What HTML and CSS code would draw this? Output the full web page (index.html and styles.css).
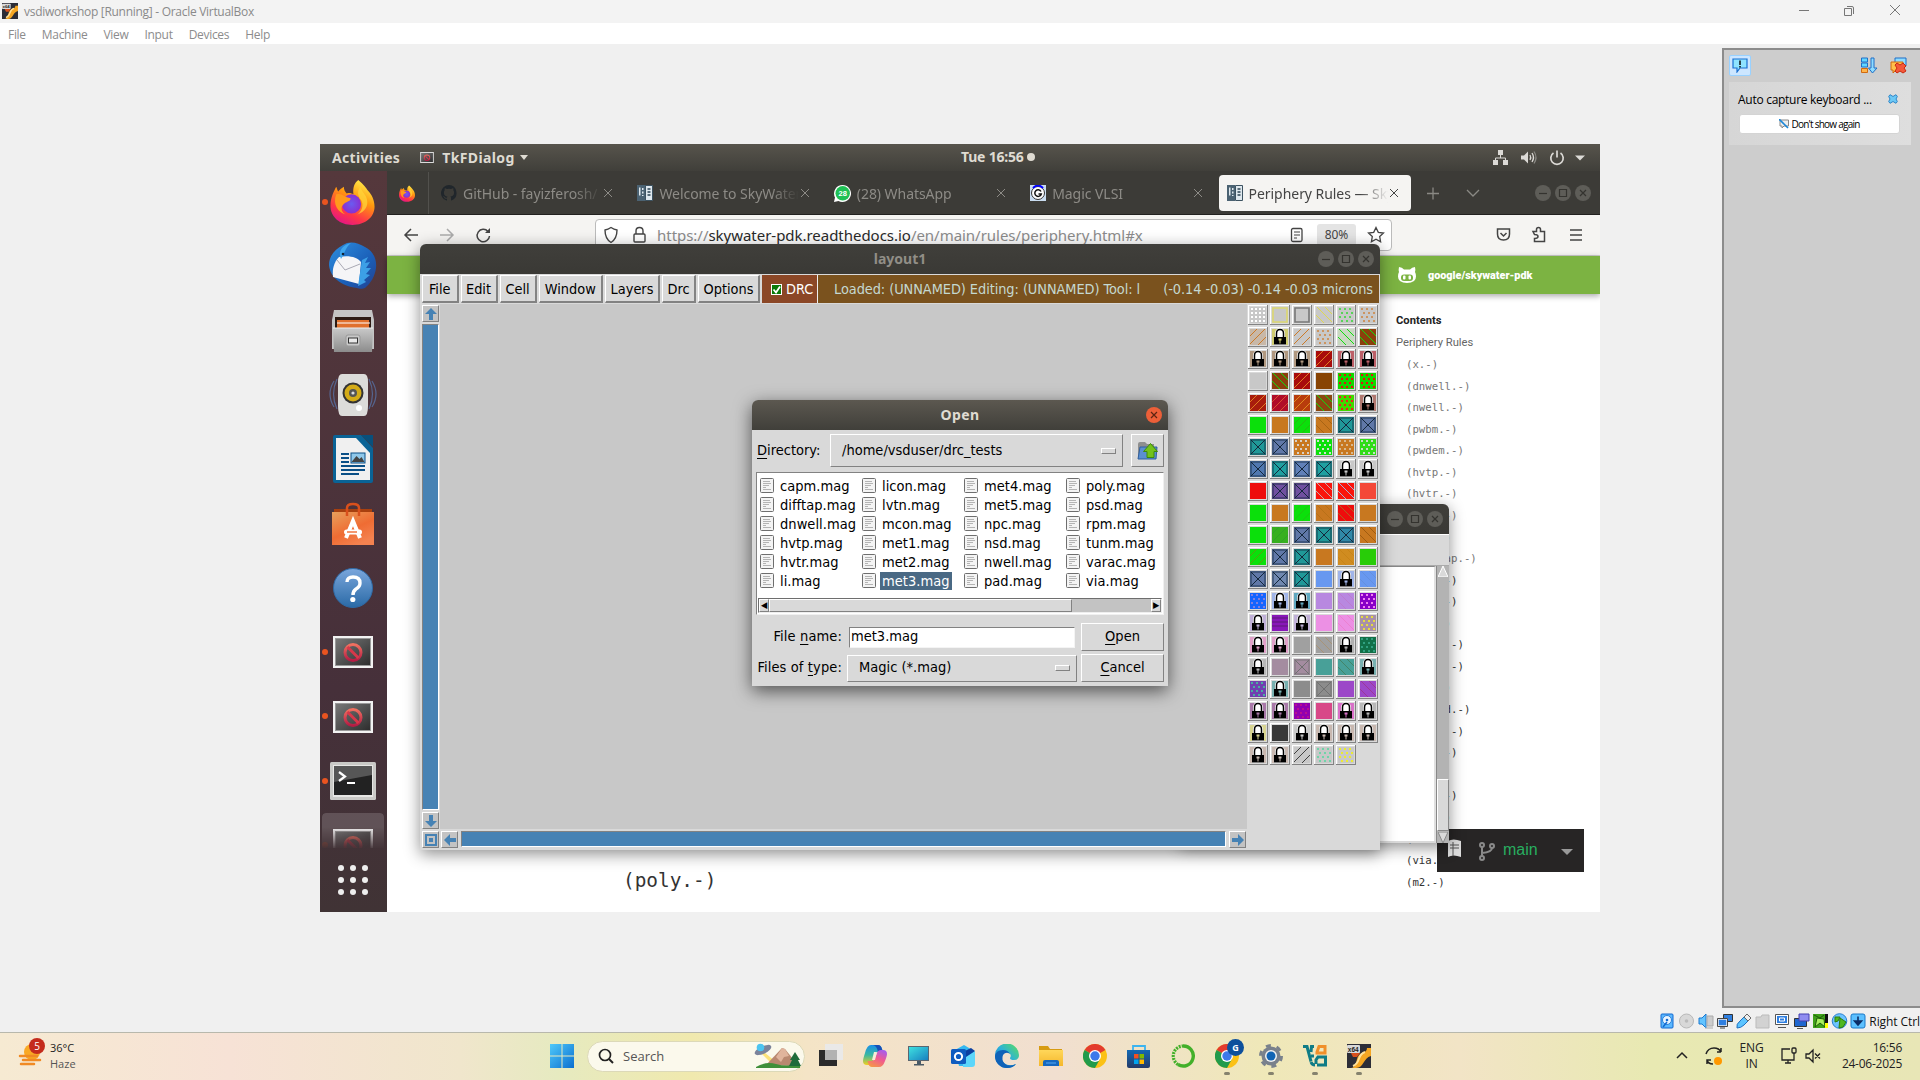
FILE: index.html
```html
<!DOCTYPE html>
<html lang="en">
<head>
<meta charset="utf-8">
<title>vsdiworkshop [Running] - Oracle VirtualBox</title>
<link rel="stylesheet" href="styles.css">
</head>
<body>
<svg class="defs" width="0" height="0">
  <defs>
    <linearGradient id="gFox" x1=".8" y1="0" x2=".3" y2="1"><stop offset="0" stop-color="#fff44f"/><stop offset=".4" stop-color="#ff980e"/><stop offset=".75" stop-color="#ff3647"/><stop offset="1" stop-color="#e31587"/></linearGradient>
    <radialGradient id="gGlobe"><stop offset="0" stop-color="#6a5cf0"/><stop offset="1" stop-color="#8a2fd0"/></radialGradient>
    <linearGradient id="gBird" x1="0" y1="0" x2="1" y2="1"><stop offset="0" stop-color="#2d8fe0"/><stop offset=".6" stop-color="#1b5fb8"/><stop offset="1" stop-color="#23408f"/></linearGradient>
    <linearGradient id="gCab" x1="0" y1="0" x2="0" y2="1"><stop offset="0" stop-color="#c9c9c9"/><stop offset="1" stop-color="#8c8c8c"/></linearGradient>
    <linearGradient id="gBag" x1="0" y1="0" x2=".6" y2="1"><stop offset="0" stop-color="#e8a05c"/><stop offset=".6" stop-color="#ef6c33"/><stop offset="1" stop-color="#f48250"/></linearGradient>
    <linearGradient id="gHelp" x1="0" y1="0" x2="0" y2="1"><stop offset="0" stop-color="#7aa6dc"/><stop offset="1" stop-color="#2a6aa6"/></linearGradient>
    <linearGradient id="gScr" x1="0" y1="0" x2="1" y2="1"><stop offset="0" stop-color="#777"/><stop offset="1" stop-color="#2e2e2e"/></linearGradient>
    <linearGradient id="gNo" x1="0" y1="0" x2="0" y2="1"><stop offset="0" stop-color="#f07060"/><stop offset="1" stop-color="#b41c44"/></linearGradient>
    <linearGradient id="gWin" x1="0" y1="0" x2="1" y2="1"><stop offset="0" stop-color="#4fc9fa"/><stop offset="1" stop-color="#0a6fd0"/></linearGradient>
    <linearGradient id="gEdge" x1="0" y1="1" x2="1" y2="0"><stop offset="0" stop-color="#0f5fb8"/><stop offset=".5" stop-color="#2bb0dc"/><stop offset="1" stop-color="#5be05a"/></linearGradient>
    <linearGradient id="gMon" x1="0" y1="0" x2="1" y2="1"><stop offset="0" stop-color="#3fe0e0"/><stop offset="1" stop-color="#1780c0"/></linearGradient>
    <linearGradient id="gFold" x1="0" y1="0" x2="0" y2="1"><stop offset="0" stop-color="#ffd75a"/><stop offset="1" stop-color="#f5b72c"/></linearGradient>
    <linearGradient id="gStore" x1="0" y1="0" x2="0" y2="1"><stop offset="0" stop-color="#1269b4"/><stop offset="1" stop-color="#243a68"/></linearGradient>
    <linearGradient id="gCopA" x1="0" y1="0" x2="0" y2="1"><stop offset="0" stop-color="#1a8fe8"/><stop offset=".5" stop-color="#3ab8a0"/><stop offset="1" stop-color="#f0d020"/></linearGradient>
    <linearGradient id="gCopB" x1=".8" y1="0" x2=".3" y2="1"><stop offset="0" stop-color="#a45cf0"/><stop offset=".5" stop-color="#f05a90"/><stop offset="1" stop-color="#f5944a"/></linearGradient>
  </defs>
  <symbol id="firefox" viewBox="0 0 46 48">
    <path d="M29 1c6 5 8 8 10 11 4 4 7 10 7 17 0 11-10 19-23 19S0 40 0 28C0 19 4 12 6 8c1 2 1 3 2 5 2-2 4-4 6-5 0 3 1 5 3 7 3-1 5 0 7 1C23 9 25 4 29 1z" fill="url(#gFox)"/>
    <circle cx="22" cy="26" r="10" fill="url(#gGlobe)"/>
    <path d="M6 16c6-2 8 3 15 4 0 4-5 3-8 7-3 3-1 8 3 10-8-2-14-10-10-21z" fill="#ff9a1c"/>
    <path d="M31 8c-3 5-3 9 1 14 3 5 1 12-4 15 8-3 12-9 10-16-1-5-5-7-7-13z" fill="#ffd43a" opacity=".75"/>
  </symbol>
  <symbol id="thunder" viewBox="0 0 48 48">
    <path d="M14 3c7-5 15-2 22 2 8 4 12 12 11 21-1 8-5 15-11 20-2 1-6 1-8 0C12 44 1 35 0 23 0 14 6 7 14 3z" fill="url(#gBird)"/>
    <path d="M10 15c10-2 18 0 22 5l-2 22L4 35C3 27 5 20 10 15z" fill="#f5f5f7"/>
    <path d="M8 18l8 10 15-6" fill="none" stroke="#a9a9b4"/>
    <path d="M12 17c-3-6 0-14 10-16-6 5-6 10-10 16z" fill="#3fa7ee"/><circle cx="14" cy="12" r="1.3" fill="#123"/>
    <path d="M33 18l6-3-3 6 5-1-4 6 5 0-5 6 4 1-6 5 2 2-8 4z" fill="#3c9fe6"/>
  </symbol>
  <symbol id="cabinet" viewBox="0 0 42 44">
    <path d="M2 1h38l2 10v29H0V11z" fill="#c4c4c4"/><path d="M3 8h36v11H3z" fill="#2c1a14"/>
    <path d="M5 11h32v8H5z" fill="#e0702c"/><path d="M5 14h33" stroke="#fff"/>
    <path d="M1 19h40l-1 24H2z" fill="url(#gCab)"/><path d="M1 19h40" stroke="#eee"/>
    <rect x="14" y="26" width="14" height="11" rx="2" fill="#c8c8c8" stroke="#999"/><rect x="16.500" y="29" width="9" height="5" fill="#e8e8e8" stroke="#333"/>
  </symbol>
  <symbol id="rhythm" viewBox="0 0 48 44">
    <path d="M5 8q-8 13 0 26M43 8q8 13 0 26M8 6q-7 15 0 30M40 6q7 15 0 30" fill="none" stroke="#56658f" stroke-width="1.200"/>
    <path d="M13 1h22q4 0 4 8v24q0 10-4 10H13q-4 0-4-10V9q0-8 4-8z" fill="#dcdcda"/>
    <circle cx="24" cy="20" r="10.500" fill="#333"/><circle cx="24" cy="20" r="8.500" fill="#d3ab18"/><circle cx="24" cy="20" r="4" fill="#555"/><circle cx="24" cy="20" r="1.600" fill="#ddd"/><circle cx="30" cy="35" r="3" fill="#fff"/>
  </symbol>
  <symbol id="writer" viewBox="0 0 40 48">
    <path d="M2 0h26l12 13v33q0 2-2 2H2q-2 0-2-2V2q0-2 2-2z" fill="#0a6396"/><path d="M28 0h12v12z" fill="#08507c"/>
    <path d="M3 3h20l14 15v27H3z" fill="#f0f0f0"/>
    <path d="M8 19h8M8 23h8M8 27h8M8 31h24M8 35h24M8 39h18" stroke="#0a4f86" stroke-width="1.800"/>
    <rect x="18" y="18" width="14" height="10" fill="#8fc8ea" stroke="#0a4f86"/><path d="M18.500 27l5-6 3 3 2-2 3 5z" fill="#444"/>
  </symbol>
  <symbol id="bag" viewBox="0 0 42 44">
    <path d="M2 7h38v6H2z" fill="#a8400f"/><path d="M0 10h42v33H0z" fill="url(#gBag)"/>
    <path d="M15 14V6q0-4 6-4t6 4v8" fill="none" stroke="#d9501c" stroke-width="2.500"/>
    <path d="M14 36l7-17 7 17" fill="none" stroke="#fff" stroke-width="4"/><rect x="12" y="27.500" width="18" height="5" rx="2.500" fill="#fff"/><path d="M15 30h10" stroke="#ef6c33" stroke-width="1.400"/>
  </symbol>
  <symbol id="help" viewBox="0 0 40 40"><circle cx="20" cy="20" r="19.500" fill="url(#gHelp)" stroke="#2f6aa6"/>
    <path d="M14 14q0-5 6-5 7 0 7 6 0 4-4 6-3 2-3 6" fill="none" stroke="#fff" stroke-width="3.400"/><circle cx="19.800" cy="31.500" r="2.600" fill="#fff"/></symbol>
  <symbol id="xapp" viewBox="0 0 40 32"><path d="M0 0h40v32H0z" fill="#f2f2f2"/><path d="M2 2h36v28H2z" fill="#999"/><path d="M3 3h34v26H3z" fill="url(#gScr)"/>
    <circle cx="20" cy="16.500" r="8" fill="none" stroke="url(#gNo)" stroke-width="3"/><path d="M14.500 11l11 11" stroke="#d8384a" stroke-width="3"/></symbol>
  <symbol id="term" viewBox="0 0 46 38"><rect width="46" height="38" rx="1.500" fill="#c9c9c6"/><path d="M3 3h40v32H3z" fill="#e6e6e4"/><path d="M4 4h38v29H4z" fill="#222"/><path d="M4 4h38v9L4 20z" fill="#565656"/>
    <path d="M9 10l6 4.500L9 19" fill="none" stroke="#fff" stroke-width="2.200"/><path d="M17 21h8" stroke="#fff" stroke-width="2"/></symbol>
  <symbol id="book" viewBox="0 0 16 16"><path d="M0 0h8v16H0z" fill="#4b6272"/><path d="M8.500.5h7v15h-7z" fill="#dfe8ee" stroke="#3c5261"/><path d="M2 2.500h1.500v8H2zM5 3h1.500v2H5zM5 6.500h1.500v2H5zM5 10h1.500v1H5z" fill="#dfe8ee"/><path d="M10.500 4h3M10.500 7h3M10.500 10h3" stroke="#2b4252" stroke-width="1.500"/></symbol>
  <symbol id="x" viewBox="0 0 10 10"><path d="M1 1l8 8M9 1L1 9" fill="none" stroke="currentColor"/></symbol>
  <symbol id="wmin" viewBox="0 0 16 16"><circle cx="8" cy="8" r="8" fill="#5e5d58"/><path d="M4 8.500h8" stroke="#34332f" stroke-width="1.200"/></symbol>
  <symbol id="wmax" viewBox="0 0 16 16"><circle cx="8" cy="8" r="8" fill="#5e5d58"/><path d="M4.500 4.500h7v7h-7z" fill="none" stroke="#34332f" stroke-width="1.200"/></symbol>
  <symbol id="wcls" viewBox="0 0 16 16"><circle cx="8" cy="8" r="8" fill="#5e5d58"/><path d="M5 5l6 6M11 5l-6 6" stroke="#34332f" stroke-width="1.200"/></symbol>
  <symbol id="doc" viewBox="0 0 14 15"><rect x=".5" y=".5" width="13" height="14" rx="1" fill="#f4f4f4" stroke="#6e6e6e"/><path d="M3 3.500h7M3 5.500h8M3 7.500h6M3 9.500h3M3 11.500h8" stroke="#b4b4b4"/></symbol>
  <symbol id="chrome" viewBox="0 0 24 24"><circle cx="12" cy="12" r="12" fill="#fbc116"/><path d="M12 12L1.600 6A12 12 0 0 1 22.400 6z" fill="#e33b2e"/><path d="M1.600 6A12 12 0 0 0 12 24l5-9-5-3z" fill="#219b4b"/><circle cx="12" cy="12" r="6" fill="#fff"/><circle cx="12" cy="12" r="4.700" fill="#3c79ea"/></symbol>
  <symbol id="x64" viewBox="0 0 24 24"><path d="M0 0h24v24H0z" fill="#2c2d37"/><path d="M4 24c8-1 3-12 11-15 3-1 5-2 5-5h4v8c-8 2-7 12-15 12z" fill="#f5a623"/><path d="M6 22c8-3 4-12 12-14" fill="none" stroke="#ffe19a" stroke-width="2"/><path d="M4 9h9l-3 4H6z" fill="#d8501c"/><rect x="0" y="1" width="13" height="8" rx="1" fill="#d8d8d8"/><text x=".8" y="7.600" font-size="6.500" font-weight="700" font-family="Liberation Sans, sans-serif" fill="#222">x64</text></symbol>
</svg>

<header class="titlebar">
  <svg class="app-icon"><use href="#x64"/></svg>
  <span class="title">vsdiworkshop [Running] - Oracle VirtualBox</span>
  <svg class="winctl" width="104" height="14" viewBox="0 0 104 14"><g fill="none" stroke="#777"><path d="M1 7.500h10M46.500 5.500h7v7h-7zM49 3.500h5q1.500 0 1.500 1.500v6M92 2l10 10M102 2L92 12"/></g></svg>
</header>
<nav class="menubar"><span>File</span><span>Machine</span><span>View</span><span>Input</span><span>Devices</span><span>Help</span></nav>

<main class="host">
  <section class="guest">
    <div class="topbar">
      <b class="act">Activities</b>
      <svg width="14" height="11" viewBox="0 0 40 32"><use href="#xapp"/></svg>
      <b class="appname">TkFDialog</b><i class="tri"></i>
      <b class="clock">Tue 16:56 <i></i></b>
      <svg class="sys" width="96" height="18" viewBox="0 0 96 18"><g fill="#dcdad6"><path d="M6 1h5v5H6zM1 11h5v5H1zM11 11h5v5h-5z"/><path d="M3.500 11V9h10v2M8.500 6v3" fill="none" stroke="#dcdad6"/><path d="M29 6.500h3l4-4v12l-4-4h-3z"/><path d="M38 6q1.500 2.500 0 5M40 4q3 4.500 0 9" fill="none" stroke="#dcdad6" stroke-width="1.300"/><path d="M42 2.500q4 6 0 12" fill="none" stroke="#8a8984" stroke-width="1.200"/><path d="M61.500 4a6.200 6.200 0 1 0 7 0M65 1.500v7" fill="none" stroke="#dcdad6" stroke-width="1.700"/><path d="M83 6.500h10l-5 5z"/></g></svg>
    </div>
    <div class="desk">
      <aside class="dock">
        <div class="di on"><svg width="45" height="46"><use href="#firefox"/></svg></div>
        <div class="di"><svg width="48" height="48"><use href="#thunder"/></svg></div>
        <div class="di"><svg width="42" height="44"><use href="#cabinet"/></svg></div>
        <div class="di"><svg width="48" height="44"><use href="#rhythm"/></svg></div>
        <div class="di"><svg width="40" height="48"><use href="#writer"/></svg></div>
        <div class="di"><svg width="42" height="44"><use href="#bag"/></svg></div>
        <div class="di"><svg width="40" height="40"><use href="#help"/></svg></div>
        <div class="di on"><svg width="40" height="32"><use href="#xapp"/></svg></div>
        <div class="di on"><svg width="40" height="32"><use href="#xapp"/></svg></div>
        <div class="di on"><svg width="46" height="38"><use href="#term"/></svg></div>
        <div class="di on cut"><svg width="40" height="32"><use href="#xapp"/></svg></div>
        <div class="apps"><i></i><i></i><i></i><i></i><i></i><i></i><i></i><i></i><i></i></div>
      </aside>
      <section class="browser">
        <div class="tabs">
          <div class="home"><svg width="16" height="17"><use href="#firefox"/></svg></div>
          <div class="tab"><svg width="16" height="16" viewBox="0 0 16 16"><path fill="#20262b" d="M8 0a8 8 0 0 0-2.500 15.600c.4 0 .5-.2.500-.4v-1.500c-2.200.5-2.700-1-2.700-1-.4-.9-.9-1.200-.9-1.200-.7-.5 0-.5 0-.5.800.1 1.200.8 1.200.8.700 1.300 1.900.9 2.400.7 0-.5.300-.9.500-1.100-1.800-.2-3.600-.9-3.600-4 0-.9.300-1.600.8-2.100 0-.2-.3-1 .1-2.100 0 0 .7-.2 2.200.8a7.500 7.500 0 0 1 4 0c1.500-1 2.200-.8 2.200-.8.400 1.100.1 1.900.1 2.100.5.600.8 1.300.8 2.100 0 3.100-1.900 3.700-3.700 3.900.3.300.6.800.6 1.500v2.200c0 .2.100.5.500.4A8 8 0 0 0 8 0z"/></svg><span>GitHub - fayizferosh/</span><svg class="tx"><use href="#x"/></svg></div>
          <div class="tab"><svg width="16" height="16"><use href="#book"/></svg><span>Welcome to SkyWater</span><svg class="tx"><use href="#x"/></svg></div>
          <div class="tab"><svg width="17" height="17" viewBox="0 0 17 17"><path d="M8.500 0a8.500 8.500 0 1 1-4 16L0 17l1-4.500A8.500 8.500 0 0 1 8.500 0z" fill="#fff"/><circle cx="8.700" cy="8.300" r="7.200" fill="#1fc155"/><text x="8.700" y="11" text-anchor="middle" font-size="7.500" font-weight="700" font-family="Liberation Sans, sans-serif" fill="#fff">28</text></svg><span>(28) WhatsApp</span><svg class="tx"><use href="#x"/></svg></div>
          <div class="tab"><svg width="16" height="16" viewBox="0 0 16 16"><path fill="#c9dcf0" d="M0 0h16v16H0z"/><circle cx="8" cy="8" r="6.500" fill="#fff" stroke="#333"/><path d="M3 3q5-5 10 0" fill="none" stroke="#00f" stroke-width="2"/><path d="M11 6.500a3.300 3.300 0 1 0 .3 2.500H8.500" fill="none" stroke="#111" stroke-width="1.500"/></svg><span>Magic VLSI</span><svg class="tx"><use href="#x"/></svg></div>
          <div class="tab active"><svg width="16" height="16"><use href="#book"/></svg><span>Periphery Rules — Sky</span><svg class="tx"><use href="#x"/></svg></div>
          <svg class="tabend" width="182" height="18" viewBox="0 0 182 18"><g fill="none" stroke="#8a8984" stroke-width="1.300"><path d="M16 9.500h12M22 3.500v12M56 6l6 6 6-6"/></g><g transform="translate(124 1)"><use href="#wmin" width="16" height="16"/><use href="#wmax" x="20" width="16" height="16"/><use href="#wcls" x="40" width="16" height="16"/></g></svg>
        </div>
        <div class="navbar">
          <svg class="navs" width="98" height="18" viewBox="0 0 98 18"><g fill="none" stroke="#444" stroke-width="1.500"><path d="M15 9H2M8 3L2 9l6 6"/><path d="M37 9h13M44 3l6 6-6 6" stroke="#aaa"/><path d="M85 5.500A6.200 6.200 0 1 0 86.500 10"/><path d="M87 2v5h-5z" fill="#444" stroke="none"/></g></svg>
          <div class="url">
            <svg width="46" height="18" viewBox="0 0 46 18"><g fill="none" stroke="#444" stroke-width="1.400"><path d="M8 1.500q3 2 6 2.500c0 6-2 10-6 12.500C4 14 2 10 2 4q3-.5 6-2.500z"/><rect x="31" y="8" width="11" height="8" rx="1"/><path d="M33 8V5q0-3.500 3.500-3.500T40 5v3"/></g></svg>
            <span class="addr">https://<em>skywater-pdk.readthedocs.io</em>/en/main/rules/periphery.html#x</span>
            <svg width="14" height="16" viewBox="0 0 14 16"><rect x="1.500" y="1.500" width="10.500" height="13" rx="1.500" fill="none" stroke="#444" stroke-width="1.300"/><path d="M4 5h6M4 8h6M4 11h3" stroke="#444" stroke-width="1.200"/></svg>
            <span class="zoom">80%</span>
            <svg width="18" height="18" viewBox="0 0 18 18"><path d="M9 1.500l2.300 4.800 5.200.7-3.800 3.600.9 5.200L9 13.300l-4.600 2.500.9-5.200L1.500 7l5.200-.7z" fill="none" stroke="#444" stroke-width="1.300"/></svg>
          </div>
          <svg width="90" height="18" viewBox="0 0 90 18"><g fill="none" stroke="#444" stroke-width="1.500"><path d="M2.500 3h12v5q0 6-6 6t-6-6zM5.500 7l3 3 3-3"/><path d="M38 5.500h3.500v-2q0-2 2-2t2 2v2h4v10h-10v-3q3.500 0 3.500-2t-3.500-2z"/><path d="M75 4h12M75 9h12M75 14h12"/></g></svg>
        </div>
        <div class="greenbar"><svg width="18" height="16" viewBox="0 0 18 16"><path fill="#fff" d="M1 0q3 0 5 2.500h6Q14 0 17 0q.7 3 0 5 1 1.500 1 4.500 0 6.500-9 6.500T0 9.500Q0 6.500 1 5q-.7-2 0-5z"/><rect x="3" y="7.500" width="12" height="6.500" rx="3" fill="#7cb342"/><rect x="5" y="8.500" width="2.500" height="4" rx="1" fill="#fff"/><rect x="10.500" y="8.500" width="2.500" height="4" rx="1" fill="#fff"/></svg><b>google/skywater-pdk</b></div>
        <div class="page">
          <div class="article"><code>(poly.-)</code><p>Table 48 Function Defines FETs extraction measurement and others</p></div>
          <div class="toc"><b>Contents</b><span>Periphery Rules</span>
            <ul><li>(x.-)</li><li>(dnwell.-)</li><li>(nwell.-)</li><li>(pwbm.-)</li><li>(pwdem.-)</li><li>(hvtp.-)</li><li>(hvtr.-)</li><li>(lvtn.-)</li><li>(ncm.-)</li><li>(difftap.-)</li></ul>
            <ul class="dk"><li>(tunm.-)</li><li>(poly.-)</li><li>(rpm.-)</li><li>(varac.-)</li><li>(photo.-)</li><li>(npc.-)</li><li>(n/ psd.-)</li><li>(licon.-)</li><li>(mcon.-)</li><li>(ct.-)</li><li>(capm.-)</li><li>(vpp.-)</li><li>(m1.-)</li><li>(via.-)</li><li>(m2.-)</li></ul>
          </div>
        </div>
      </section>
    </div>

    <div class="version"><svg width="110" height="24" viewBox="0 0 110 24"><path d="M11 2q5-3 13 0v16q-8-3-13 0z" fill="#ddd"/><path d="M16 3v14M13 6h9M13 9h9" stroke="#555"/><g fill="none" stroke="#8a8a8a" stroke-width="2"><circle cx="45" cy="6" r="2"/><circle cx="45" cy="19" r="2"/><circle cx="55" cy="7" r="2"/><path d="M45 8v9M55 9q0 4-10 5"/></g></svg><span>main</span><i></i></div>

    <section class="win console">
      <div class="wtitle"><svg class="wb"><use href="#wmin" width="16" height="16"/><use href="#wmax" x="20" width="16" height="16"/><use href="#wcls" x="40" width="16" height="16"/></svg></div>
      <div class="cmenu"></div>
      <div class="cbody"><div class="ctext"></div><div class="cscroll"><svg width="10" height="11"><path d="M5 0l5 11H0z" fill="#d9d9d9" stroke="#fff"/></svg><i></i><svg width="10" height="11"><path d="M0 0h10L5 11z" fill="#d9d9d9" stroke="#888"/></svg></div></div>
    </section>

    <section class="win magic">
      <div class="wtitle"><span>layout1</span><svg class="wb"><use href="#wmin" width="16" height="16"/><use href="#wmax" x="20" width="16" height="16"/><use href="#wcls" x="40" width="16" height="16"/></svg></div>
      <div class="mmenu"><span class="w36">File</span><span class="w37">Edit</span><span class="w38">Cell</span><span class="w65">Window</span><span class="w56">Layers</span><span class="w34">Drc</span><span class="w63">Options</span>
        <div class="drc"><svg width="11" height="11"><path d="M0 0h11v11H0z" fill="#fff"/><path d="M1 1h9v9H1z" fill="#0a7a0a"/><path d="M2.500 5.500l2.500 3L9 2.500" fill="none" stroke="#fff" stroke-width="1.800"/></svg>DRC</div>
        <div class="status"><span>Loaded: (UNNAMED) Editing: (UNNAMED) Tool: l</span><span class="pos">(-0.14 -0.03) -0.14 -0.03 microns</span></div></div>
      <div class="mbody">
        <div class="vs"><svg class="ar"><path d="M8 2l6 6h-4v6H6V8H2z"/></svg><i></i><svg class="ar"><path d="M8 14l6-6h-4V2H6v6H2z"/></svg><svg class="ar"><path d="M2 2h12v12H2zM4 4v8h8V4z" fill-rule="evenodd"/><path d="M6 6h4v4H6z"/></svg></div>
        <div class="mcol"><div class="canvas"></div>
          <div class="hs"><svg class="ar"><path d="M2 8l6-6v4h6v4H8v4z"/></svg><i></i><svg class="ar"><path d="M14 8L8 2v4H2v4h6v4z"/></svg></div></div>
        <div class="palette" id="palette"></div>
      </div>
    </section>

    <section class="win dialog">
      <div class="wtitle"><span>Open</span><svg class="wb1" width="16" height="16"><circle cx="8" cy="8" r="8" fill="#ec5f38"/><path d="M5 5l6 6M11 5l-6 6" stroke="#5c2412" stroke-width="1.200"/></svg></div>
      <div class="dbody">
        <div class="drow r1"><label><u>D</u>irectory:</label><div class="sel raised"><span>/home/vsduser/drc_tests</span><i></i></div><div class="up raised"><svg width="22" height="20" viewBox="0 0 22 20"><path d="M1 3q0-2 2-2h5l2 2h7v15H1z" fill="#8f8f8f"/><path d="M3 6h17l-1 12H1z" fill="#5b8fd0" stroke="#2f5f9f"/><path d="M13.500 2.500l7 8h-3.500v6h-7v-6H6.500z" fill="#73c21a" stroke="#3e8a0a"/></svg></div></div>
        <div class="list">
          <div class="files" id="fileList"></div>
          <div class="fscroll"><b class="raised">◀</b><i class="raised"></i><em></em><b class="raised">▶</b></div>
        </div>
        <div class="drow r2"><label>File <u>n</u>ame:</label><div class="entry">met3.mag</div><div class="btn raised"><u>O</u>pen</div></div>
        <div class="drow r3"><label>Files of <u>t</u>ype:</label><div class="sel raised"><span>Magic (*.mag)</span><i></i></div><div class="btn raised"><u>C</u>ancel</div></div>
      </div>
    </section>
  </section>

  <aside class="notes">
    <div class="ntools"><span class="nsel"><svg width="16" height="16" viewBox="0 0 16 16"><path d="M1 2h14v9H8l-3 4v-4H1z" fill="#8fe4ff" stroke="#1a6fd0" stroke-width="1.200"/><path d="M8 3.500v4.500M8 9v1.500" stroke="#000" stroke-width="1.400"/></svg></span>
      <svg class="n2" width="46" height="17" viewBox="0 0 46 17"><g stroke="#1f6fc8"><path d="M.5 1h6v4h-6zM.5 6h6v4h-6z" fill="#62d6ff"/><path d="M.5 11.500h6v4h-6z" fill="#ffb54a" stroke="#d06a10"/><path d="M10 1h3v10h3l-4.500 5L7.500 11H10z" fill="#8fdcff"/><path d="M34 1h11v8H34z" fill="#8fdcff"/></g><path d="M30 5h12v8h-7l-3 3v-3h-2z" fill="#ffc04a" stroke="#d06a10"/><path d="M36 6l3 2 3-2 3 3-2 2 2 3-3 2-3-2-3 2-2-2 2-3-2-3z" fill="#f4583a" stroke="#c82a10"/></svg></div>
    <div class="ncard"><div class="nh"><span>Auto capture keyboard ...</span><svg width="10" height="10" viewBox="0 0 10 10"><path d="M2 .7L5 2.500 8 .7 9.300 2.500 8 5l1.300 2.500L8 9.300 5 7.500 2 9.300.7 7.500 2 5 .7 2.500z" fill="#6cc8f5" stroke="#2f86c8"/></svg></div>
      <div class="nbtn"><svg width="10" height="10" viewBox="0 0 10 10"><path d="M1 1h8.500v6H5L3 9V7H1z" fill="#eee" stroke="#888"/><path d="M0 0l9 9" stroke="#1a86d8" stroke-width="1.600"/></svg>Don't show again</div></div>
  </aside>
</main>

<footer class="vstatus">
  <svg width="206" height="17" viewBox="0 0 206 17">
    <rect x="1" y="1" width="12" height="14" rx="1" fill="#5bb8ff" stroke="#1268d0"/><circle cx="7" cy="7" r="4.500" fill="#e8f4ff" stroke="#2a7fd8"/><circle cx="7" cy="7" r="1.300" fill="#1268d0"/><path d="M3 14l4-5" stroke="#1268d0" stroke-width="1.500"/>
    <circle cx="26.500" cy="8" r="7" fill="#d8d8d8" stroke="#b8b8b8"/><circle cx="26.500" cy="8" r="1.800" fill="#bbb"/>
    <path d="M39 5h3l4-4v14l-4-4h-3z" fill="#62c4ff" stroke="#1a78d0"/><path d="M47 3h6v10h-6z" fill="#ccc" stroke="#aaa"/><path d="M45 15h8" stroke="#aaa"/>
    <path d="M63.500 1.500h9v7h-9z" fill="#2f7fe0" stroke="#333"/><path d="M58 6h9v7h-9z" fill="#2f7fe0" stroke="#eee" stroke-width="1.500"/><path d="M57.500 5.500h10v8h-10zM60 15h5" fill="none" stroke="#444"/>
    <path d="M77 15q-1-4 3-7l4-4 4 4-4 4q-3 3-7 3z" fill="#5cc4ff" stroke="#1f70c0"/><path d="M84 4l3-3 4 4-3 3z" fill="#eee" stroke="#666"/>
    <path d="M96 4h5l1-2h7v13H96z" fill="#d2d2d2" stroke="#bbb"/>
    <path d="M115.500 1.500h13v10h-13zM118 14.500h8" fill="#fff" stroke="#555"/><path d="M117 3h10v7h-10z" fill="#2f7fe0"/><path d="M119.500 5h5v3h-5z" fill="#2f7fe0" stroke="#fff"/>
    <path d="M134.500 5.500h12v8h-12z" fill="#1f66d0" stroke="#333"/><path d="M139 1h10v7h-10z" fill="#8f8cf0" stroke="#4440b0"/><path d="M137 15.500h6" stroke="#555"/>
    <path d="M153 1h12v14h-12z" fill="#3fa01a"/><path d="M155 14l2-9 7 1 1 8-5-4z" fill="#a8f060" stroke="#1c5c08"/><path d="M154 2l6 3 4-3" fill="none" stroke="#1c5c08"/><path d="M165 1h3v14h-3z" fill="#111"/><path d="M165 10h3v5h-3z" fill="#ff0"/>
    <circle cx="179.500" cy="8" r="7.300" fill="#6cc4ff" stroke="#2b7fd0"/><path d="M175 4h5l-2 4-3 1zM180 5l6 4-3 5-4 1z" fill="#4fb81f" stroke="#2d7c10"/>
    <rect x="191" y="1" width="14" height="14" rx="2" fill="#5cc0ff" stroke="#1a78c8"/><path d="M198 3.500v8M194.500 8l3.500 4 3.500-4z" fill="#0c2c66" stroke="#0c2c66" stroke-width="1.600"/>
  </svg><span>Right Ctrl</span>
</footer>

<footer class="taskbar">
  <div class="weather"><svg width="28" height="30" viewBox="0 0 28 30"><circle cx="14" cy="14" r="8" fill="#f9a825"/><path d="M2 18h17M5 22h17M3 26h13" stroke="#f08a24" stroke-width="2.500" stroke-linecap="round"/><circle cx="19" cy="8" r="8" fill="#c42b1c"/><text x="19" y="12" text-anchor="middle" font-size="10" font-family="Open Sans, sans-serif" fill="#fff">5</text></svg><div>36°C<br><span>Haze</span></div></div>
  <div class="tcenter">
    <svg class="ti" viewBox="0 0 24 24"><path d="M0 0h11.500v11.500H0zM12.500 0H24v11.500H12.500zM0 12.500h11.500V24H0zM12.500 12.500H24V24H12.500z" fill="url(#gWin)"/></svg>
    <div class="search"><svg width="16" height="16" viewBox="0 0 16 16"><circle cx="7" cy="7" r="5.500" fill="none" stroke="#222" stroke-width="1.700"/><path d="M11 11l4 4" stroke="#222" stroke-width="2"/></svg><span>Search</span>
      <svg width="48" height="26" viewBox="0 0 48 26"><path d="M10 9l-2 2 10 10 4-2z" fill="#fbe27a"/><path d="M12 22L28 5l3 1 8 10v7z" fill="#b98870"/><path d="M22 14l6-9 3 1 4 7-5 1-3 5z" fill="#e0b49c"/><path d="M2 24q10-6 20-3t24 0v4H2z" fill="#3f8f3a"/><path d="M41 9l5 8h-2l3 6H35l3-6h-2z" fill="#1f6b3a"/><ellipse cx="9" cy="7" rx="9" ry="3.800" fill="#7b839a" transform="rotate(-25 9 7)"/><circle cx="6.500" cy="4.500" r="3.800" fill="#4cc4f0"/></svg></div>
    <svg class="ti" viewBox="0 0 24 24"><path d="M0 6h18v16H0z" fill="#2b2b2b"/><path d="M6 0h18v16H6z" fill="#e9e9ea" opacity=".95"/><path d="M6 6h12v10H6z" fill="#b2b2b2"/></svg>
    <svg class="ti" viewBox="0 0 24 24"><path d="M8 1h7q3 0 4 4l1 3h-4q-3 0-4 3l-2 6q-1 4-4 4H4q-4 0-4-4 0-2 2-8Q4 1 8 1z" fill="url(#gCopA)"/><path d="M10 1h5q3 0 4 4l1 3h-5q-1-6-5-7z" fill="#1750b8"/><path d="M16 23H9q-3 0-4-4l-.5-2H8q3 0 4-3l2-5q1-3 4-3h2q4 0 4 4 0 2-2 7-2 6-6 6z" fill="url(#gCopB)"/><path d="M11 8h3l-2 8H9z" fill="#f6ecd8"/></svg>
    <svg class="ti" viewBox="0 0 24 24"><path d="M1 2h21v15H1z" fill="#5b6670"/><path d="M2 3h19v13H2z" fill="url(#gMon)"/><path d="M10 17h4v3h3v1.500H7V20h3z" fill="#4a5a66"/></svg>
    <svg class="ti" viewBox="0 0 24 24"><path d="M4 6l9-5 10 6v15H8z" fill="#35b8f0"/><path d="M12 14l12-7v13q0 3-3 3h-9z" fill="#5cd6fa"/><path d="M10 9l10-5 4 3-12 8z" fill="#0b3fa0"/><rect y="5" width="15" height="15" rx="1.500" fill="#0f5cc0"/><circle cx="7.500" cy="12.500" r="3.600" fill="none" stroke="#fff" stroke-width="2"/></svg>
    <svg class="ti" viewBox="0 0 24 24"><path d="M0 12A12 12 0 0 1 24 11q0 5-5 5-4 0-4-2 2-3-1-5-3-2-6 1-3 5 1 9 5 4 12 1-3 4-9 4A12 12 0 0 1 0 12z" fill="url(#gEdge)"/><path d="M0 12q1-6 8-6 5 0 7 4-4-3-7 1-2 5 2 9 4 3 11 0-3 4-9 4A12 12 0 0 1 0 12z" fill="#0f62b8"/></svg>
    <svg class="ti" viewBox="0 0 24 24"><path d="M0 2h9l2 3h12v16H0z" fill="#d79b12"/><path d="M0 6h24v16H0z" fill="url(#gFold)"/><path d="M4 22v-4q0-2 2-2h12q2 0 2 2v4z" fill="#1568c0"/><path d="M7 19h10" stroke="#58a8f0"/></svg>
    <svg class="ti"><use href="#chrome"/></svg>
    <svg class="ti" viewBox="0 0 24 24"><path d="M6 6V2h12v4" fill="none" stroke="#3cb4f0" stroke-width="1.800"/><path d="M0 6h23v16q0 2-2 2H2q-2 0-2-2z" fill="url(#gStore)"/><path d="M7 10h4.500v4.500H7z" fill="#f25022"/><path d="M12.500 10H17v4.500h-4.500z" fill="#7fba00"/><path d="M7 15.500h4.500V20H7z" fill="#00a4ef"/><path d="M12.500 15.500H17V20h-4.500z" fill="#ffb900"/></svg>
    <svg class="ti" viewBox="0 0 24 24"><path d="M12 2a10 10 0 1 1-5 18.500" fill="none" stroke="#43b02a" stroke-width="3.400"/><path d="M7 20.500A10 10 0 0 1 12 2" fill="none" stroke="#43b02a" stroke-width="3.200" stroke-dasharray="2 1"/></svg>
    <div class="ti run"><svg width="24" height="24"><use href="#chrome"/></svg><b class="badge">G</b></div>
    <div class="ti run"><svg width="24" height="24" viewBox="0 0 24 24"><circle cx="12" cy="12" r="9.500" fill="#79818c"/><circle cx="12" cy="12" r="10.500" fill="none" stroke="#79818c" stroke-width="3" stroke-dasharray="5 6"/><circle cx="12" cy="12" r="6" fill="#f2f2f2"/><circle cx="12" cy="12" r="4.500" fill="#1264b4"/></svg></div>
    <div class="ti run"><svg width="24" height="24" viewBox="0 0 24 24"><g fill="none" stroke-width="3"><path d="M0 2.500h4l4 15M11 2.500H8.500L8 8M8 18q1 3 4 3M11 12H8M14 21h8.500v-8H15l-2 3v4" stroke="#0f7c86"/><path d="M14 8l2-5.500h6V9h-8z" stroke="#f0902a"/></g></svg></div>
    <div class="ti run"><svg width="24" height="24"><use href="#x64"/></svg></div>
  </div>
  <div class="tray">
    <svg width="60" height="24" viewBox="0 0 60 24"><g fill="none" stroke="#222" stroke-width="1.500"><path d="M4 14l5-5 5 5"/><path d="M33 10q2-6 8-6 5 0 7 4V4M48 8h-4M40 20q-5 0-6-4M34 20v-4h4"/></g><circle cx="45" cy="17" r="4" fill="#ff9800"/></svg>
    <div class="lang">ENG<br>IN</div>
    <svg width="44" height="20" viewBox="0 0 44 20"><g fill="none" stroke="#222" stroke-width="1.300"><path d="M11 3H3v11h12v-3M6 17h6M9 14v3"/><rect x="13" y="2" width="4" height="5" rx="1"/><path d="M15 7v4"/><path d="M27 8h3l4-4v12l-4-4h-3zM36 7.500l5 5M41 7.500l-5 5"/></g></svg>
    <div class="time">16:56<br>24-06-2025</div>
  </div>
</footer>
<script src="script.js"></script>
</body>
</html>
```
FILE: styles.css
```css
* { box-sizing: border-box; }
body { margin: 0; width: 1920px; height: 1080px; overflow: hidden; display: flex; flex-direction: column; background: #f0f0f0; font-family: "Open Sans", sans-serif; font-size: 12px; }
.defs { position: absolute; }
svg { flex: none; display: block; }
i, em { font-style: normal; }
.titlebar { height: 23px; background: #f3f3f3; display: flex; align-items: center; padding-left: 2px; color: #8a8a8a; flex: none; }
.app-icon { width: 16px; height: 16px; margin: -1px 6px 0 0; }
.title { letter-spacing: -.29px; }
.winctl { margin: -3px 18px 0 auto; }
.menubar { height: 21px; background: #fff; display: flex; align-items: center; gap: 16px; padding: 2px 0 0 8px; color: #8c8c8c; font-size: 12px; letter-spacing: -.3px; flex: none; }
.host { flex: 1; display: flex; justify-content: space-between; min-height: 0; }
.vstatus { height: 24px; flex: none; display: flex; align-items: center; justify-content: flex-end; gap: 3px; padding-top: 2px; font-size: 12px; color: #111; letter-spacing: -.08px; white-space: nowrap; }

/* guest screen */
.guest { position: relative; margin: 100px 0 0 320px; width: 1280px; height: 768px; overflow: hidden; display: flex; flex-direction: column; font-family: "Noto Sans", sans-serif; font-size: 15px; }
.topbar { height: 27px; flex: none; background: linear-gradient(#57544c, #403f3a); color: #dfdbd2; display: flex; align-items: center; padding: 0 12px; font-size: 14px; position: relative; }
.act { letter-spacing: .32px; margin-right: 20px; }
.appname { margin: 0 5px 0 8px; letter-spacing: .38px; }
.tri { border: 4.5px solid transparent; border-top: 5px solid #dfdbd2; border-bottom: 0; }
.clock { position: absolute; left: 641px; top: 3px; letter-spacing: -.2px; display: flex; align-items: center; gap: 3px; }
.clock i { width: 8px; height: 8px; border-radius: 50%; background: #dfdbd2; }
.sys { margin-left: auto; }
.desk { flex: 1; display: flex; min-height: 0; }
.dock { width: 67px; flex: none; background: linear-gradient(#55383c, #46303a 70%, #403335); display: flex; flex-direction: column; }
.di { height: 64.3px; flex: none; display: flex; align-items: center; justify-content: center; position: relative; padding-right: 2px; }
.di:first-child { margin-top: -1px; }
.di.on::before { content: ""; position: absolute; left: 2px; top: 29px; width: 6px; height: 6px; border-radius: 50%; background: #e95420; }
.di.cut { height: 35px; margin: 0 3px 0 2px; padding: 16px 1px 0 0; overflow: hidden; align-items: flex-start; background: rgba(255,255,255,.16); border-radius: 4px 4px 0 0; mask-image: linear-gradient(#000 40%, transparent 105%); -webkit-mask-image: linear-gradient(#000 40%, transparent 105%); }
.di.cut::before { left: 0 !important; opacity: .5; }
.apps { display: grid; grid-template-columns: repeat(3, 6px); gap: 6px; margin: 17px 0 0 18px; }
.apps i { width: 6px; height: 6px; border-radius: 50%; background: #eee; }

/* browser */
.browser { flex: 1; display: flex; flex-direction: column; background: #fff; min-width: 0; }
.tabs { height: 44px; flex: none; background: #3c3b37; border-bottom: 1px solid #22211f; display: flex; align-items: center; padding-top: 1px; }
.home { width: 42px; height: 42px; border-right: 1px solid #52514d; display: flex; align-items: center; justify-content: center; margin-right: 4px; padding-right: 2px; }
.tab { width: 192.400px; margin-right: 4px; height: 36px; display: flex; align-items: center; padding: 0 12px 0 8px; gap: 6px; color: #8d8b86; }
.tab span { flex: 1; overflow: hidden; white-space: nowrap; font-size: 14px; mask-image: linear-gradient(90deg, #000 80%, transparent); -webkit-mask-image: linear-gradient(90deg, #000 80%, transparent); letter-spacing: -.05px; }
.tab.active { background: #f5f4f2; border-radius: 4px; color: #444; }
.tx { width: 10px; height: 10px; margin-left: -5px; }
.tabend { margin-left: -4px; }
.navbar { height: 41px; flex: none; background: #f5f4f2; border-bottom: 1px solid #ccc; display: flex; align-items: center; padding-left: 16px; }
.url { margin: 0 103px 0 94px; width: 797px; height: 32px; border: 1px solid #bbb; border-radius: 4px; background: #fff; display: flex; align-items: center; padding: 0 6px 0 7px; }
.addr { margin-left: 8px; flex: 1; color: #8c8c8c; font-size: 15px; letter-spacing: -.03px; }
.addr em { color: #2a2a2a; }
.zoom { margin: 0 11px 0 13px; background: #e4e4e4; border-radius: 3px; width: 39px; height: 22px; line-height: 22px; text-align: center; font-size: 12px; color: #444; }
.greenbar { height: 38px; flex: none; background: #7cb342; display: flex; align-items: center; gap: 12px; padding-left: 1011px; color: #fff; font: 700 10.800px Roboto, sans-serif; box-shadow: 0 2px 6px rgba(0,0,0,.35); position: relative; }
.page { flex: 1; min-height: 0; overflow: hidden; display: flex; }
.article { width: 1009px; flex: none; padding: 575px 0 0 236px; }
.article code { display: block; font: 19.400px/24px "DejaVu Sans Mono", monospace; color: #333; }
.article p { margin: 17px 0 0 216px; font: 700 9.500px/12px Roboto, sans-serif; color: #333; white-space: nowrap; }
.toc { display: flex; flex-direction: column; padding-top: 16px; font: 11.200px/22px Roboto, sans-serif; color: #666; }
.toc b { color: #222; }
.toc ul { margin: 0; padding: 0 0 0 10px; list-style: none; font: 10.700px/21.560px "DejaVu Sans Mono", monospace; color: #777; white-space: nowrap; }
.toc .dk { color: #333; }
.version { position: absolute; left: 1117px; top: 685px; width: 147px; height: 43px; background: #272525; display: flex; align-items: center; font: 16px "Liberation Sans", sans-serif; color: #27ae60; }
.version span { margin: -2px 0 0 -44px; }
.version i { margin-left: 23px; border: 6px solid transparent; border-top-color: #999; margin-top: 8px; }

/* windows */
.win { position: absolute; display: flex; flex-direction: column; border-radius: 6px 6px 0 0; background: #d9d9d9; box-shadow: 0 4px 16px rgba(0,0,0,.45); }
.wtitle { height: 30px; flex: none; border-radius: 6px 6px 0 0; background: linear-gradient(#403f3b, #3a3935); color: #918e87; font-weight: 700; font-size: 14px; display: flex; align-items: center; position: relative; }
.wtitle span { flex: 1; text-align: center; padding-bottom: 1px; }
.wb { width: 56px; height: 16px; position: absolute; right: 6px; }
.console { left: 860px; top: 360px; width: 269px; height: 339px; }
.cmenu { height: 32px; border-top: 1px solid #fff; border-bottom: 1px solid #aaa; }
.cbody { flex: 1; display: flex; }
.ctext { flex: 1; background: #fff; border-top: 1px solid #888; border-right: 2px solid #e0e0e0; margin-bottom: 2px; }
.cscroll { width: 13px; background: #b3b3b3; border-left: 1px solid #888; display: flex; flex-direction: column; align-items: center; }
.cscroll i { margin-top: auto; width: 12px; height: 52px; background: #d9d9d9; border: 1px solid; border-color: #fff #888 #888 #fff; margin-bottom: 1px; }

.magic { left: 100px; top: 100px; width: 960px; height: 606px; font: 14.400px "DejaVu Sans Condensed", "DejaVu Sans", sans-serif; font-stretch: condensed; }
.magic .wtitle { font-family: "Noto Sans", sans-serif; }
.mmenu { height: 30px; flex: none; display: flex; gap: 2px; padding: 1px 1px 1px 2px; }
.mmenu > span { border: solid #828282; border-width: 1px 2px 2px 1px; border-top-color: #fff; border-left-color: #fff; display: flex; align-items: center; justify-content: center; }
.w36 { width: 36.500px; } .w37 { width: 37px; } .w38 { width: 37px; } .w65 { width: 64.500px; } .w56 { width: 55px; } .w34 { width: 34px; } .w63 { width: 62px; }
.drc { width: 56px; background: #8b4726; color: #fff; display: flex; align-items: center; gap: 4px; padding-left: 9px; border-right: 1px solid #eee; }
.status { flex: 1; margin-left: -2px; background: #7a521e; color: #c4d8d0; display: flex; align-items: center; justify-content: space-between; padding: 0 6px 0 16px; white-space: nowrap; letter-spacing: -.06px; }
.mbody { flex: 1; display: flex; min-height: 0; }
.vs { width: 20px; padding: 1px 1px 2px 2px; display: flex; flex-direction: column; gap: 2px; }
.ar { width: 17px; height: 17px; background: #c3c3c3; border: 1px solid; border-color: #fff #828282 #828282 #fff; fill: #4682b4; }
.vs i { flex: 1; background: #4682b4; border: 1px solid; border-color: #828282 #fff #fff #828282; }
.mcol { width: 807px; display: flex; flex-direction: column; }
.canvas { flex: 1; background: #c8c8c8; }
.hs { height: 21px; padding: 2px 1px; display: flex; gap: 3px; }
.hs i { flex: 1; background: #4682b4; border: 1px solid; border-color: #828282 #fff #fff #828282; margin: 0 0 1px; }
.palette { flex: 1; padding: 1px 0 0 1px; display: grid; grid-template-columns: repeat(6, 20px); grid-auto-rows: 20px; gap: 2px; align-content: start; }
.palette svg { width: 20px; height: 20px; }

.dialog { left: 432px; top: 256px; width: 416px; height: 286px; box-shadow: 0 5px 18px rgba(0,0,0,.6); }
.dialog .wtitle { background: linear-gradient(#5c5850, #403f3a); color: #dfdbd2; letter-spacing: .4px; }
.wb1 { position: absolute; right: 6px; }
.dbody { flex: 1; display: flex; flex-direction: column; padding: 4px 4px 0; font: 14.500px "DejaVu Sans Condensed", "DejaVu Sans", sans-serif; color: #000; }
.raised { border: 1px solid; border-color: #fff #828282 #828282 #fff; background: #d9d9d9; }
.drow { display: flex; align-items: center; }
.drow u { text-underline-offset: 3px; text-decoration-thickness: 1px; }
.drow label, .sel span { padding-bottom: 2px; }
.r1 { height: 33px; }
.r1 label { width: 74px; padding-left: 1px; }
.sel { display: flex; align-items: center; justify-content: space-between; padding: 0 6px 0 11px; }
.sel i { width: 15px; height: 6px; border: 1px solid; border-color: #fff #828282 #828282 #fff; }
.r1 .sel { width: 293px; height: 33px; }
.up { width: 33px; height: 33px; margin-left: 8px; display: flex; align-items: center; justify-content: center; }
.list { margin-top: 5px; height: 143px; background: #fff; border: 1px solid; border-color: #828282 #f0f0f0 #f0f0f0 #828282; display: flex; flex-direction: column; padding: 3px 1px 1px; }
.files { flex: 1; padding-left: 2px; display: grid; grid-auto-flow: column; grid-template-rows: repeat(6, 19px); grid-template-columns: repeat(4, 102px); width: 400px; }
.f { display: flex; align-items: center; gap: 4px; white-space: nowrap; }
.f svg { width: 14px; height: 15px; margin-top: -1px; }
.f span { line-height: 18px; padding: 0 2px; letter-spacing: .04px; }
.f.s span { background: #4a6984; color: #fff; }
.fscroll { height: 15px; display: flex; background: #c3c3c3; border: 1px solid; border-color: #6e6e6e #eee #eee #6e6e6e; }
.fscroll b { width: 10px; font-size: 9px; line-height: 11px; display: flex; justify-content: center; }
.fscroll i { width: 303px; }
.fscroll em { flex: 1; }
.r2 { margin-top: 8px; height: 28px; }
.r3 { margin-top: 3px; height: 28px; }
.r2 label, .r3 label { width: 87px; text-align: right; padding-right: 1px; white-space: nowrap; letter-spacing: .12px; }
.entry { width: 226px; height: 21px; margin: 0 6px; background: #fff; border: 1px solid; border-color: #828282 #f4f4f4 #f4f4f4 #828282; padding-left: 1px; line-height: 17px; }
.r3 .sel { width: 230px; height: 27px; margin: 0 4px; }
.btn { width: 83px; height: 28px; display: flex; align-items: center; justify-content: center; padding-bottom: 2px; }

/* notification column */
.notes { margin-top: 4px; width: 198px; height: 960px; background: #cdcdcd; border: 2px solid #8c8c8c; border-right: 0; padding: 4px 9px 0 5px; flex: none; }
.ntools { height: 22px; display: flex; align-items: center; justify-content: space-between; }
.nsel { width: 22px; height: 21px; background: #cce6ff; border: 1px solid #99d1ff; border-radius: 2px; display: flex; align-items: center; justify-content: center; }
.n2 { margin-right: 4px; }
.ncard { margin-top: 6px; height: 63px; background: linear-gradient(90deg, #d6d6d6, #dedede); padding: 8px 11px 0 9px; }
.nh { height: 18px; display: flex; align-items: center; justify-content: space-between; color: #000; font-size: 12px; letter-spacing: -.28px; }
.nh svg { margin-right: 2px; }
.nbtn { margin: 6px 0 0 1px; height: 20px; width: 161px; background: #fff; border: 1px solid #d4d4d4; border-radius: 3px; display: flex; align-items: center; justify-content: center; gap: 2px; font-size: 10px; letter-spacing: -.75px; color: #000; white-space: nowrap; }

/* taskbar */
.taskbar { height: 48px; flex: none; border-top: 1px solid #b8b8ac; background: linear-gradient(90deg, #f6ead2 0, #f7e2d6 12%, #f0e6cc 24%, #e6eac0 29%, #f0e9ae 36%, #f4e4c6 42%, #f1dfd0 55%, #efe8b8 66%, #f2e4c6 76%, #e8e9b2 86%, #e8e6b6 100%); display: flex; justify-content: space-between; color: #222; padding-bottom: 1px; }
.weather { width: 550px; display: flex; gap: 4px; padding: 5px 0 0 18px; font-size: 11px; line-height: 16px; }
.weather div { padding-top: 2px; }
.weather span { color: #555; }
.tcenter { display: flex; align-items: center; flex: 1; }
.ti { width: 24px; height: 24px; margin-right: 20px; position: relative; flex: none; }
.ti:first-child { margin-right: 13px; }
.run::after { content: ""; position: absolute; left: 9px; top: 28px; width: 6px; height: 3px; border-radius: 2px; background: #85826e; }
.badge { position: absolute; left: 12px; top: -5px; width: 17px; height: 17px; border-radius: 50%; background: #0d509c; color: #fff; font-size: 9px; line-height: 17px; text-align: center; }
.search { width: 218px; height: 31px; margin-right: 14px; border-radius: 16px; background: #fbf9ec; border: 1px solid #dcd9b8; display: flex; align-items: center; padding: 0 2px 0 10px; }
.search span { flex: 1; padding-left: 9px; font-size: 13px; color: #555; }
.tray { display: flex; align-items: center; width: 247px; padding-right: 18px; font-size: 12px; line-height: 16px; text-align: center; white-space: nowrap; }
.lang { width: 25px; margin: 0 15px 0 6px; letter-spacing: -.2px; }
.time { flex: 1; text-align: right; letter-spacing: -.25px; }
```
FILE: script.js
```js
// Layer palette. Each entry: kind[:fill[:mark]]
// s solid, a "/" hatch, b "\" hatch, d dots, w fine grid, x contact cross, f frame, l locked, h bars
const rows = [
  'w:c8c8c8:ffffff f:c8c8c8:dcd870 f:c8c8c8:787878 b:c8c8c8:e0d850 d:c8c8c8:58d458 d:c8c8c8:cc9460',
  'a:c8b8a8:cc7a28 l:d0cc70 a:c8c8c8:cc7a28 d:c8c8c8:cc9460 b:c8d8c0:10dc10 b:8b400c:10dc10',
  'l:b09880 l:b09880 l:b09880 a:a80c0c:e07a20 l:bc6068 l:bc6068',
  's:c8c8c8 b:8b400c:10dc10 a:a80c0c:e07a20 s:884404 d:10d800:e81010 d:10d800:e81010',
  'a:a81c0c:e07a20 a:b00c28:d85030 a:b83c0c:e08a20 b:8b4810:10dc10 d:40d800:f02020 l:b07870',
  's:0be00b s:c87820 a:0be00b:28b810 b:c87820:a86414 x:209898 x:6078a8',
  'x:209898 x:6078a8 d:c87820:d8d0c8 d:0be00b:d0e0d0 d:c87820:d8b890 d:30dc18:c8dcc8',
  'x:5078b0 x:20a0a0 x:6080b8 x:20a0a0 l:c8c8c8 l:c8c8c8',
  's:ee0c0c x:7050a0 x:7050a0 b:fa140c:c8a8a8 b:fa140c:a8b0d8 s:f44838',
  's:0be00b s:c87820 a:0be00b:20c410 b:c87820:b87018 b:ee0c0c:b06020 s:c87820',
  's:0be00b a:38b020:30a428 x:6078a8 x:209898 x:3088a8 b:c87820:a05c10',
  'a:0be00b:58a010 x:6078a8 x:209898 s:c87820 b:d08c20:c88418 s:28cc08',
  'x:6078a8 x:7088b0 x:209898 s:6898f0 l:a0b4e8 b:6898f0:6490e0',
  'd:1464ff:8080e0 l:a0b4e8 l:60a8c0 s:b888e0 b:b888e0:bc7cd0 d:8800c8:f080f0',
  'l:c0b0d8 h:8818b8:5c1878 l:c0b0d8 s:ec90e4 b:ec90e4:ec80d0 d:a890a8:e4dc40',
  'l:e0a0c8 l:e0a0c8 s:a0a0a0 b:a0a0a0:a89478 l:b0b0b0 d:107048:30a080',
  'l:b8b8b8 s:a48ca0 x:a48ca0 s:48a098 b:48a098:448468 l:78b0b0',
  'd:7040b0:48b0a0 l:78b0b0 s:8c8c8c x:8c8c8c s:9c48c8 b:9c48c8:9c3898',
  'l:a878a8 l:a878a8 d:9000b0:b81090 s:d84888 l:d870c8 l:b8b8b8',
  'l:d8d490 s:383838 l:c8c8c8 l:c8b8b0 l:c8b8b0 l:c8b8b0',
  'l:c8b8b0 l:c8b8b0 a:c8c8c8:404040 d:c8c8c8:70d4a8 d:c8c8c8:ecec30'
];

function squares(color, stepX, stepY, stagger) {
  let d = '';
  for (let y = 3, r = 0; y < 17; y += stepY, r++) {
    for (let x = 3 + (stagger && r % 2 ? 2 : 0); x < 17; x += stepX) d += `M${x} ${y}h2v2h-2z`;
  }
  return `<path d="${d}" fill="#${color}"/>`;
}

function mark(kind, fill, color) {
  const stroke = (d, w) => `<path d="${d}" fill="none" stroke="#${color}" stroke-width="${w}"/>`;
  if (kind === 'a') return stroke('M2 9L9 2M2 17L17 2M10 18L18 10', 1);
  if (kind === 'b') return stroke('M11 2L18 9M3 2L18 17M2 10L10 18', 1);
  if (kind === 'f') return stroke('M3 3h14v14H3z', 1.6);
  if (kind === 'h') return stroke('M2 5h16M2 9h16M2 13h16', 1);
  if (kind === 'w') return squares(color, 4, 4, false);
  if (kind === 'd') return squares(color, 5, 4, true);
  if (kind === 'x') {
    const soft = fill === 'a48ca0' || fill === '8c8c8c';
    const c = soft ? '#707070' : '#14283c';
    return `<path d="M3 3h14v14H3z" fill="none" stroke="${c}" stroke-opacity=".4" stroke-width="2"/><path d="M3 3l14 14M17 3L3 17" stroke="${c}" stroke-width="1"/>`;
  }
  if (kind === 'l') return '<path d="M4 10h1V6q1-5 5-5t5 5v4h1v8H4z" fill="#fff"/>' +
    '<path d="M6.500 10V6.500Q6.500 2.500 10 2.500t3.500 4V10" fill="none" stroke="#000" stroke-width="1.500"/>' +
    `<path d="M4 10h12v7.500H4z" fill="#000"/><path d="M8.500 11.500h3v2h-1v3h-1v-3h-1z" fill="#${fill}"/>`;
  return '';
}

document.getElementById('palette').innerHTML = rows.join(' ').split(' ').map(cell => {
  const [kind, fill, color] = cell.split(':');
  return `<svg viewBox="0 0 20 20"><path d="M0 0h20v20H0z" fill="#828282"/><path d="M0 0h19v19H0z" fill="#fff"/><path d="M1 1h18v18H1z" fill="#d9d9d9"/><path d="M2 2h16v16H2z" fill="#${fill}"/>${mark(kind, fill, color)}</svg>`;
}).join('');

const names = 'capm difftap dnwell hvtp hvtr li licon lvtn mcon met1 met2 met3 met4 met5 npc nsd nwell pad poly psd rpm tunm varac via';
document.getElementById('fileList').innerHTML = names.split(' ').map(n =>
  `<div class="f${n === 'met3' ? ' s' : ''}"><svg><use href="#doc"/></svg><span>${n}.mag</span></div>`).join('');
```
